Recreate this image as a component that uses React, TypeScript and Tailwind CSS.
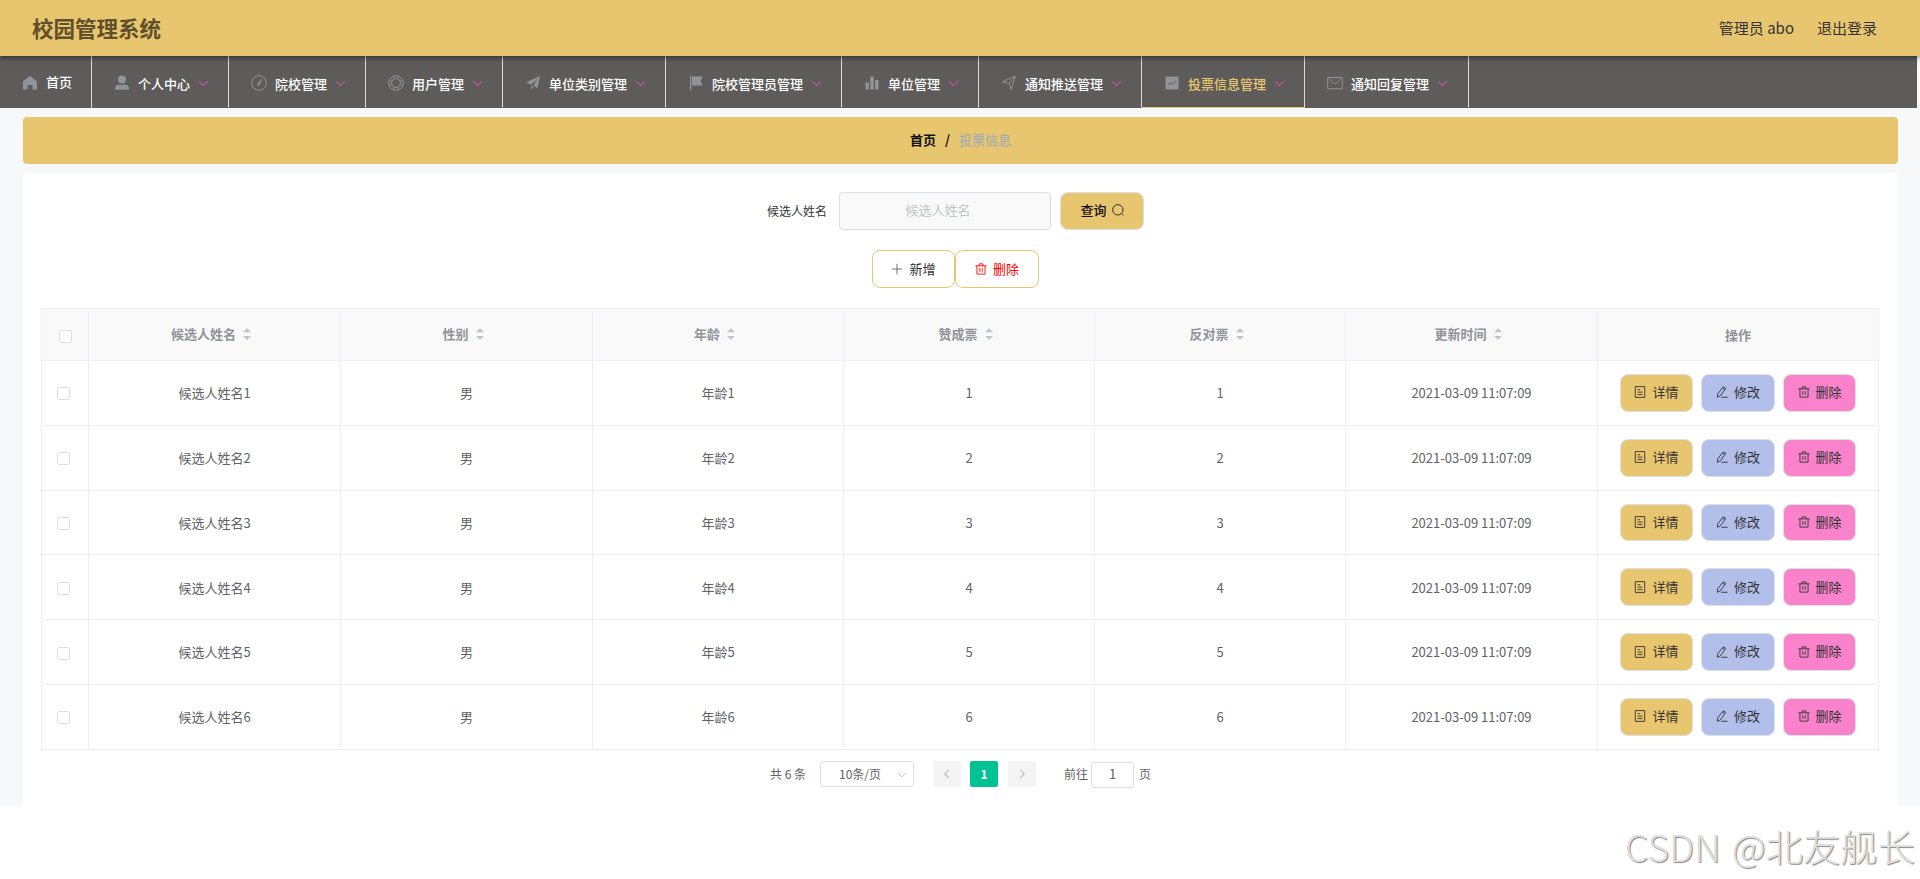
import React from "react";

const ICONS: Record<string, React.ReactNode> = {
  home: <path fill="currentColor" d="M8 .8 15 6.6v8h-4.4V11q0-1-1-1H6.4q-1 0-1 1v3.6H1v-8z" />,
  user: <g fill="currentColor"><circle cx="8" cy="4.6" r="4" /><path d="M1 14.7v-1.2Q1 9.8 4.7 9.8h6.6q3.7 0 3.7 3.7v1.2z" /></g>,
  odometer: <g fill="none" stroke="currentColor"><circle cx="8" cy="8" r="7.3" /><path d="M10.8 4 7 8.6 6.6 11l2-1.6z" fill="currentColor" strokeWidth=".5" /></g>,
  help: <g fill="none" stroke="currentColor"><circle cx="8" cy="8" r="7.3" /><circle cx="8" cy="8" r="4.4" /><path d="M6 1.2v3M10 1.2v3M6 11.8v3M10 11.8v3M1.2 6h3M1.2 10h3M11.8 6h3M11.8 10h3" strokeWidth=".8" /></g>,
  promotion: <path fill="currentColor" d="M1 7.2 15 1l-2.6 12-4.2-2.2L13 3.2 6 9.8zM6.2 10.8l2.2 1.3L6.2 15z" />,
  flag: <path fill="currentColor" d="M2 .8h1.3v14.4H2zM4 1.6h10.6L12.8 6l1.8 4.6H4z" />,
  data: <path fill="currentColor" d="M1.5 7.5h3.4v7H1.5zM6.3 1.5h3.4v13H6.3zM11.1 5h3.4v9.5h-3.4z" />,
  position: <path fill="none" stroke="currentColor" d="m1.3 6.8 13-5.6-4 13.4-2.1-6.1zm6.9 1.7 5.8-7" />,
  marketing: <g><path fill="currentColor" d="M1.5 1.5h13v13h-13z" /><path d="m3.8 10.2 2.6-2.4 2.2 1.6L12 5.6" fill="none" stroke="#5e5c5a" /></g>,
  message: <g fill="none" stroke="currentColor"><rect x=".7" y="2.5" width="14.6" height="11.3" rx=".5" /><path d="m1.5 3 5.3 5.1q1.2 1 2.4 0L14.5 3" /></g>,
  search: <g fill="none" stroke="currentColor" strokeWidth="1.1"><circle cx="7.8" cy="7.8" r="6.9" /><path d="m12.6 12.6 2.6 2.8" /></g>,
  plus: <path fill="none" stroke="currentColor" strokeWidth="1.1" d="M8 1v14M1 8h14" />,
  trash: <path fill="none" stroke="currentColor" strokeWidth="1.2" d="M.5 3.8h15M5.4 3.8V1.2h5.2v2.6M2.6 3.8v11h10.8v-11M6.4 6.8v5M9.6 6.8v5" />,
  doc: <path fill="none" stroke="currentColor" strokeWidth="1.2" d="M1.7.8h12.6v14.4H1.7zM4.8 5h3.4M4.8 8.2h6.4M4.8 11.4h6.4" />,
  edit: <path fill="none" stroke="currentColor" strokeWidth="1.2" d="M9.8 1 13 3.1 5.8 13.2 1.8 15l.4-4.4zM7 15h8.5M8.7 2.7 12 4.9" />,
  down: <path fill="none" stroke="currentColor" strokeWidth="1.5" d="m1.8 5 6.2 6 6.2-6" />,
  left: <path fill="none" stroke="currentColor" strokeWidth="2.2" d="M11 1.5 4.5 8l6.5 6.5" />,
  right: <path fill="none" stroke="currentColor" strokeWidth="2.2" d="M5 1.5 11.5 8 5 14.5" />,
};

function Icon({ name, className }: { name: string; className: string }) {
  return <svg viewBox="0 0 16 16" className={`shrink-0 ${className}`}>{ICONS[name]}</svg>;
}

const MENU = [
  { label: "个人中心", icon: "user", width: "w-[137px]" },
  { label: "院校管理", icon: "odometer", width: "w-[137px]" },
  { label: "用户管理", icon: "help", width: "w-[137px]" },
  { label: "单位类别管理", icon: "promotion", width: "w-[163px]" },
  { label: "院校管理员管理", icon: "flag", width: "w-[176px]" },
  { label: "单位管理", icon: "data", width: "w-[137px]" },
  { label: "通知推送管理", icon: "position", width: "w-[163px]" },
  { label: "投票信息管理", icon: "marketing", width: "w-[163px]", active: true },
  { label: "通知回复管理", icon: "message", width: "w-[164px]" },
];

const COLUMNS = ["候选人姓名", "性别", "年龄", "赞成票", "反对票", "更新时间"];
const ROWS = [1, 2, 3, 4, 5, 6];
const GRID = "grid grid-cols-[47px_252px_252px_251px_251px_251px_252px_281px]";
const CELL = "flex items-center justify-center border-r border-[#ebeef5]";

function ActionButton({ icon, label, color }: { icon: string; label: string; color: string }) {
  return (
    <button className={`flex h-[37.8px] w-[73.6px] items-center justify-center gap-[6px] rounded-lg border border-[#dcdfe6] pb-0.5 text-[13px] text-[#333] ${color}`}>
      <Icon name={icon} className="mt-px size-3" />
      {label}
    </button>
  );
}

export default function App() {
  return (
    <div className="flex h-[879px] w-full flex-col overflow-hidden bg-white font-['Noto_Sans_CJK_SC',sans-serif] text-[13px] text-[#606266]">
      <header className="relative z-10 flex h-14 shrink-0 items-center justify-between bg-[#e8c66f] pr-[43px] pl-8 shadow-[0_1px_6px_rgba(0,0,0,0.6)]">
        <h1 className="text-[21.5px] font-bold text-[#5f502b]">校园管理系统</h1>
        <div className="flex gap-[23px] text-[15px] text-[#333]">
          <span>管理员 abo</span>
          <span>退出登录</span>
        </div>
      </header>

      <div className="h-[750px] shrink-0 bg-[#f7f8fa]">
        <nav className="flex h-[52px] w-[1917px] bg-[#5e5c5a] font-medium text-white">
          <div className="flex w-[92px] items-center border-r border-[#ddd] pb-px pl-[22px]">
            <Icon name="home" className="mt-0.5 size-4 text-[#909399]" />
            <span className="ml-2">首页</span>
          </div>
          {MENU.map((item) => (
            <div key={item.label} className={`flex items-center border-r border-b border-r-[#ddd] pl-[22px] ${item.width} ${item.active ? "border-b-[#e8c66f] text-[#e8c66f]" : "border-b-transparent"}`}>
              <Icon name={item.icon} className="mt-0.5 size-4 text-[#909399]" />
              <span className="mt-1 ml-2 whitespace-nowrap">{item.label}</span>
              <Icon name="down" className="mt-[3px] ml-2 size-[11px] text-[#d5559c]" />
            </div>
          ))}
        </nav>

        <div className="mt-[9px] ml-[23px] flex h-[47px] w-[1875px] items-center justify-center rounded bg-[#e8c66f] pb-0.5">
          <span className="font-bold text-[#111]">首页</span>
          <span className="mx-[9px] font-bold text-[#111]">/</span>
          <span className="text-[#97a8be]">投票信息</span>
        </div>

        <main className="mt-[9px] ml-[23px] flex h-[633px] w-[1875px] flex-col bg-white px-[18px] pt-[19px]">
          <div className="flex h-[38px] shrink-0 justify-center pr-[10px]">
            <span className="mr-3 self-center text-xs text-[#333]">候选人姓名</span>
            <div className="flex w-[212px] items-center justify-center rounded border border-[#dcdfe6] bg-[#f9f9f9] pr-3.5 pb-0.5 text-[#c0c4cc]">候选人姓名</div>
            <button className="ml-[9px] flex w-[84px] items-center justify-center gap-[5px] rounded-lg border border-[#dcdfe6] bg-[#e8c66f] pb-0.5 font-medium text-[#111]">
              查询
              <Icon name="search" className="size-3" />
            </button>
          </div>

          <div className="mt-5 flex h-[38px] shrink-0 justify-center pr-[10px]">
            <button className="flex w-[83px] items-center justify-center gap-[6px] rounded-lg border border-[#e8c66f] text-[#333]">
              <Icon name="plus" className="size-3 text-[#555]" />
              新增
            </button>
            <button className="flex w-[84px] items-center justify-center gap-[6px] rounded-lg border border-[#e8c66f] text-[#f00]">
              <Icon name="trash" className="size-3" />
              删除
            </button>
          </div>

          <section className="mt-5 w-[1838px] shrink-0 border-t border-l border-[#ebeef5]">
            <div className={`${GRID} h-[52px] border-b border-[#ebeef5] bg-[#f9f9f9] font-bold text-[#909399]`}>
              <div className={`${CELL} pt-[3px] pl-px`}>
                <span className="size-[13px] rounded-[2px] border border-[#dcdfe6] bg-white" />
              </div>
              {COLUMNS.map((name) => (
                <div key={name} className={`${CELL} gap-[7px] pr-[7px] pb-0.5`}>
                  {name}
                  <svg viewBox="0 0 8 12" className="h-3 w-2 fill-[#c0c4cc]"><path d="M0 4.3 4 .3l4 4zM0 8h8l-4 4z" /></svg>
                </div>
              ))}
              <div className={CELL}>操作</div>
            </div>
            {ROWS.map((n) => (
              <div key={n} className={`${GRID} h-[64.8px] border-b border-[#ebeef5]`}>
                <div className={`${CELL} pt-0.5 pr-[3px]`}>
                  <span className="size-[13px] rounded-[2px] border border-[#dcdfe6] bg-white" />
                </div>
                <div className={CELL}>候选人姓名{n}</div>
                <div className={CELL}>男</div>
                <div className={CELL}>年龄{n}</div>
                <div className={CELL}>{n}</div>
                <div className={CELL}>{n}</div>
                <div className={CELL}>2021-03-09 11:07:09</div>
                <div className={`${CELL} gap-2`}>
                  <ActionButton icon="doc" label="详情" color="bg-[#e8c66f]" />
                  <ActionButton icon="edit" label="修改" color="bg-[#b1bfea]" />
                  <ActionButton icon="trash" label="删除" color="bg-[#fa82cb]" />
                </div>
              </div>
            ))}
          </section>

          <div className="mt-[11px] flex h-[26px] shrink-0 items-center pl-[729px] text-xs">
            <span className="w-[50px] whitespace-nowrap">共 6 条</span>
            <div className="flex h-[26px] w-[94px] items-center justify-between rounded-[3px] border border-[#dcdfe6] pr-1.5 pl-[18px]">
              10条/页
              <Icon name="down" className="mt-0.5 size-[10px] text-[#c0c4cc]" />
            </div>
            <div className="ml-[19px] flex h-[26px] w-7 items-center justify-center rounded-[2px] bg-[#f4f4f5] text-[#c0c4cc]"><Icon name="left" className="mr-px size-[10px]" /></div>
            <div className="ml-[9px] flex h-[26px] w-7 items-center justify-center rounded-[2px] bg-[#00c292] font-bold text-white">1</div>
            <div className="ml-[10px] flex h-[26px] w-7 items-center justify-center rounded-[2px] bg-[#f4f4f5] text-[#c0c4cc]"><Icon name="right" className="size-[10px]" /></div>
            <span className="ml-7">前往</span>
            <div className="mt-0.5 ml-[3px] flex h-[26px] w-[43px] items-center justify-center rounded-[3px] border border-[#dcdfe6] pb-0.5 text-[13px]">1</div>
            <span className="ml-[5px]">页</span>
          </div>
        </main>
      </div>

      <div className="absolute top-[822px] left-[1625px] text-[37.3px] leading-[48px] font-light whitespace-nowrap text-[#dedede] [text-shadow:1px_1px_1px_#888] [word-spacing:3px]">CSDN @北友舰长</div>
    </div>
  );
}
